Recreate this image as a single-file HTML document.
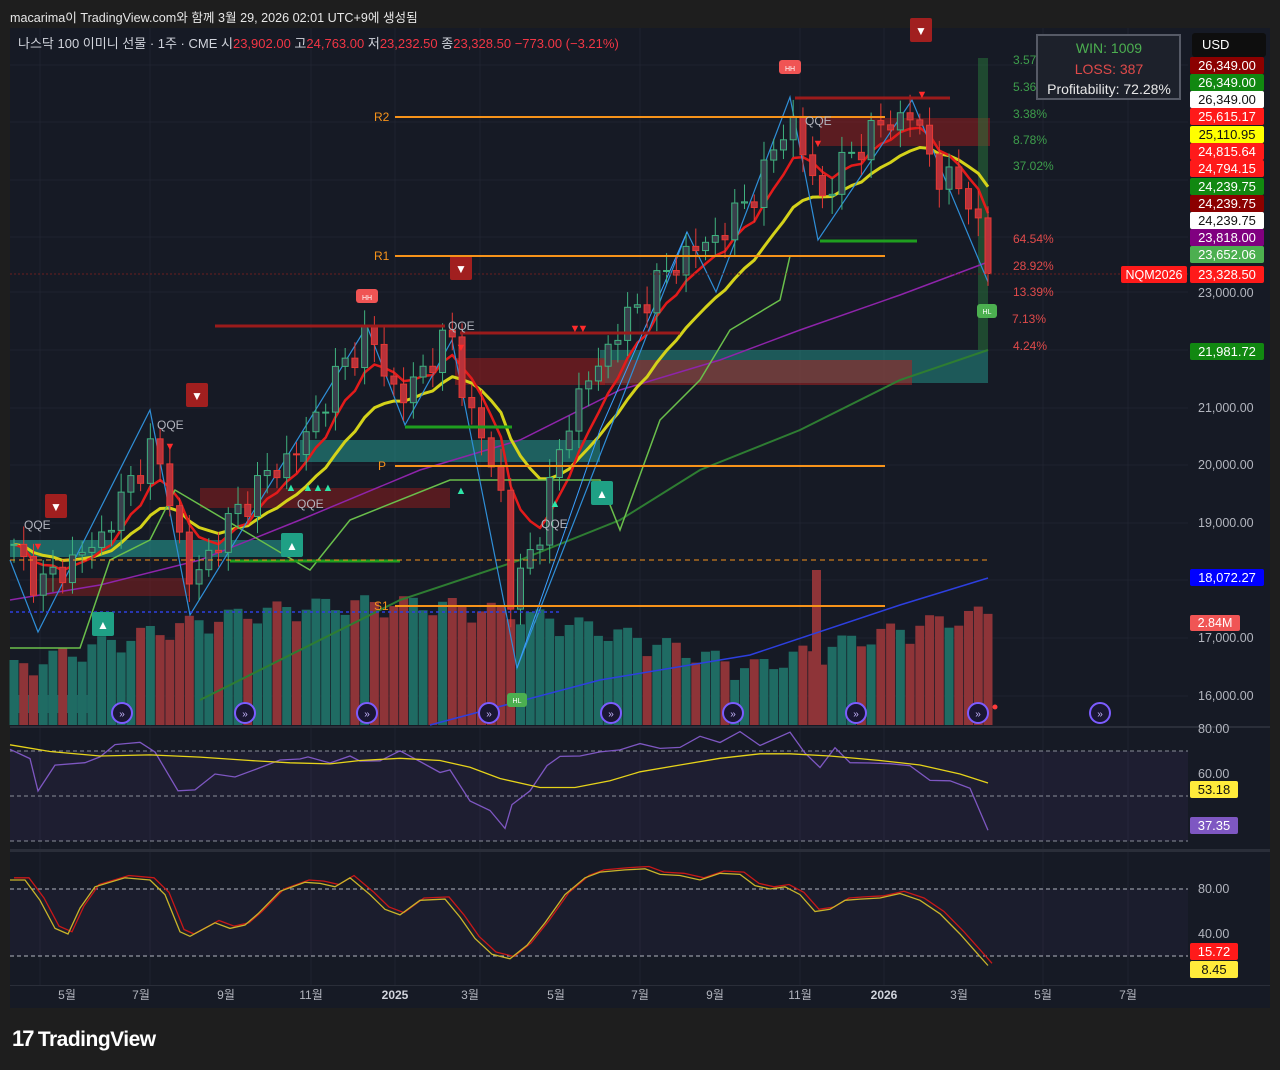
<!DOCTYPE html>
<html><head><meta charset="utf-8">
<style>
html,body{margin:0;padding:0;background:#1e1e1e;width:1280px;height:1070px;overflow:hidden;font-family:"Liberation Sans","Noto Sans CJK KR",sans-serif}
#top{position:absolute;left:10px;top:7px;color:#e6e6e6;font-size:12.6px}
#chart{position:absolute;left:10px;top:28px;width:1260px;height:980px;background:#161a25}
svg text{font-family:"Liberation Sans","Noto Sans CJK KR",sans-serif}
#logo{position:absolute;left:12px;top:1026px;color:#fff;font-size:21px;font-weight:bold;letter-spacing:-0.5px}
</style></head><body>
<div id="top">macarima이 TradingView.com와 함께 3월 29, 2026 02:01 UTC+9에 생성됨</div>
<div id="chart"></div>
<svg id="s" width="1280" height="1070" style="position:absolute;left:0;top:0">
<g id="grid"></g><g id="zones"></g><g id="vol"></g><g id="lines"></g><g id="candles"></g><g id="ov"></g>
<g font-size="13">
<text x="18" y="48" fill="#d1d4dc">나스닥 100 이미니 선물 · 1주 · CME  시<tspan fill="#f23645">23,902.00</tspan>  고<tspan fill="#f23645">24,763.00</tspan>  저<tspan fill="#f23645">23,232.50</tspan>  종<tspan fill="#f23645">23,328.50</tspan>  <tspan fill="#f23645">−773.00 (−3.21%)</tspan></text>
</g>
<g font-size="12" fill="#f7931a">
<line x1="395" y1="117" x2="885" y2="117" stroke="#f7931a" stroke-width="2"/><text x="374" y="121">R2</text>
<line x1="395" y1="256" x2="885" y2="256" stroke="#f7931a" stroke-width="2"/><text x="374" y="260">R1</text>
<line x1="395" y1="466" x2="885" y2="466" stroke="#f7931a" stroke-width="2"/><text x="378" y="470">P</text>
<line x1="395" y1="606" x2="885" y2="606" stroke="#f7931a" stroke-width="2"/><text x="374" y="610">S1</text>
</g>
<g font-size="12" fill="#3e9e4c">
<text x="1013" y="64">3.57</text><text x="1013" y="91">5.36</text><text x="1013" y="118">3.38%</text><text x="1013" y="144">8.78%</text><text x="1013" y="170">37.02%</text>
</g>
<g font-size="12" fill="#e04a4a">
<text x="1013" y="243">64.54%</text><text x="1013" y="270">28.92%</text><text x="1013" y="296">13.39%</text><text x="1012" y="323">7.13%</text><text x="1013" y="350">4.24%</text>
</g>
<g>
<rect x="1037" y="35" width="143" height="64" fill="#1d212b" stroke="#565a66" stroke-width="2"/>
<text x="1109" y="53" font-size="14" fill="#4caf50" text-anchor="middle">WIN: 1009</text>
<text x="1109" y="74" font-size="14" fill="#e04a4a" text-anchor="middle">LOSS: 387</text>
<text x="1109" y="94" font-size="14" fill="#e8e8e8" text-anchor="middle">Profitability: 72.28%</text>
</g>
<g font-size="12.5" fill="#b2b5be" id="axis"></g>
<g font-size="12" fill="#b2b5be">
<text x="67" y="999" text-anchor="middle">5월</text><text x="141" y="999" text-anchor="middle">7월</text><text x="226" y="999" text-anchor="middle">9월</text><text x="311" y="999" text-anchor="middle">11월</text><text x="395" y="999" text-anchor="middle" font-weight="bold" fill="#d1d4dc">2025</text><text x="470" y="999" text-anchor="middle">3월</text><text x="556" y="999" text-anchor="middle">5월</text><text x="640" y="999" text-anchor="middle">7월</text><text x="715" y="999" text-anchor="middle">9월</text><text x="800" y="999" text-anchor="middle">11월</text><text x="884" y="999" text-anchor="middle" font-weight="bold" fill="#d1d4dc">2026</text><text x="959" y="999" text-anchor="middle">3월</text><text x="1043" y="999" text-anchor="middle">5월</text><text x="1128" y="999" text-anchor="middle">7월</text>
</g>
<g font-size="12" fill="#b2b5be">
<text x="24" y="529">QQE</text><text x="157" y="429">QQE</text><text x="297" y="508">QQE</text><text x="448" y="330">QQE</text><text x="541" y="528">QQE</text><text x="805" y="125">QQE</text>
</g>
</svg>
<div id="logo"><span style="font-size:22px;letter-spacing:-2px">17</span> TradingView</div>
<script>
const S=document.getElementById('s');const NS='http://www.w3.org/2000/svg';
function el(g,t,a,txt){const e=document.createElementNS(NS,t);for(const k in a)e.setAttribute(k,a[k]);if(txt!=null)e.textContent=txt;document.getElementById(g)?document.getElementById(g).appendChild(e):S.appendChild(e);return e;}
const Y=p=>465-(p-20000)*0.0575;
[40,150,311,395,480,640,800,884,1043,1128].forEach(x=>el('grid','line',{x1:x,y1:28,x2:x,y2:985,stroke:'#1f2330'}));
[65,122,180,237,292,350,408,465,523,580,638,696].forEach(y=>el('grid','line',{x1:10,y1:y,x2:1188,y2:y,stroke:'#1f2330'}));
el('grid','rect',{x:10,y:726,width:1260,height:2,fill:'#2a2e39'});
el('grid','rect',{x:10,y:849,width:1260,height:3,fill:'#2a2e39'});
el('grid','rect',{x:10,y:985,width:1260,height:1,fill:'#2a2e39'});
el('grid','rect',{x:10,y:751,width:1178,height:90,fill:'rgba(126,87,194,0.08)'});
el('grid','rect',{x:10,y:889,width:1178,height:67,fill:'rgba(126,87,194,0.06)'});
[751,796,841].forEach(y=>el('grid','line',{x1:10,y1:y,x2:1188,y2:y,stroke:'#8a8e99','stroke-dasharray':'4 3'}));
[889,956].forEach(y=>el('grid','line',{x1:10,y1:y,x2:1188,y2:y,stroke:'#b2b5be','stroke-dasharray':'4 3'}));
const Z=[[10,540,280,17,'rgba(38,166,154,0.55)'],[300,440,300,22,'rgba(38,166,154,0.5)'],[600,350,388,33,'rgba(38,166,154,0.45)'],[455,358,150,27,'rgba(160,30,30,0.55)'],[600,360,312,25,'rgba(170,35,35,0.55)'],[200,488,250,20,'rgba(140,30,30,0.55)'],[40,578,150,18,'rgba(140,30,30,0.5)'],[10,695,85,18,'rgba(38,166,154,0.5)'],[820,118,170,28,'rgba(160,30,30,0.5)']];
Z.forEach(z=>el('zones','rect',{x:z[0],y:z[1],width:z[2],height:z[3],fill:z[4]}));
el('zones','rect',{x:978,y:58,width:10,height:292,fill:'rgba(40,120,60,0.5)'});
const K=[[14,18500],[40,17900],[100,18700],[150,20300],[170,19500],[190,17900],[225,18900],[260,19700],[300,20300],[335,21500],[367,22300],[400,21100],[450,22300],[470,20900],[500,19700],[510,17600],[540,18900],[570,20900],[620,22400],[680,23600],[720,24000],[760,24900],[790,26100],[820,24600],[850,25400],[880,25900],[912,26100],[940,25000],[970,24700],[988,23330]];
function P(x){for(let i=0;i<K.length-1;i++){if(x<=K[i+1][0]){const t=(x-K[i][0])/(K[i+1][0]-K[i][0]);return K[i][1]+t*(K[i+1][1]-K[i][1]);}}return K[K.length-1][1];}
const N=101,xs=[],cl=[];
for(let i=0;i<N;i++){const x=14+i*9.74;xs.push(x);cl.push(P(x)+Math.sin(i*2.3)*200+Math.cos(i*1.7)*120);}
cl[N-1]=23330;
for(let i=0;i<N;i++){const o=i?cl[i-1]:cl[0];const up=cl[i]>=o;const h=40+Math.abs(Math.sin(i*3.1))*65+Math.abs(Math.cos(i*0.7))*25;
el('vol','rect',{x:xs[i]-4.5,y:725-h,width:9,height:h,fill:up?'#1f6b63':'#8e3438'});}
el('vol','rect',{x:812,y:570,width:9,height:155,fill:'#8e3438'});
function ema(a,n){const k=2/(n+1);let r=[a[0]];for(let i=1;i<a.length;i++)r.push(a[i]*k+r[i-1]*(1-k));return r;}
function pl(arr,col,w,g,off){let d='';arr.forEach((v,i)=>{d+=(i?'L':'M')+xs[i].toFixed(1)+' '+Y(v+(off||0)).toFixed(1)});el(g||'lines','path',{d:d,fill:'none',stroke:col,'stroke-width':w,'stroke-linejoin':'round'});}
const e1=ema(cl,6),e2=ema(cl,14);
el('lines','path',{d:'M200 700 L400 600 L520 560 L620 520 L700 470 L800 430 L900 380 L988 350',fill:'none',stroke:'#2e7d32','stroke-width':2});
el('lines','path',{d:'M10 600 L100 585 L200 560 L300 520 L420 470 L520 440 L620 390 L720 360 L800 330 L900 295 L988 262',fill:'none',stroke:'#8e24aa','stroke-width':1.5});
el('lines','path',{d:'M430 725 L600 680 L750 655 L900 605 L988 578',fill:'none',stroke:'#2d3fe0','stroke-width':1.5});
pl(e2,'#d4d21a',3);pl(e1,'#e31b1b',2.5);
el('lines','path',{d:'M10 648 L80 648 L110 560 L150 540 L175 490 L310 570 L350 520 L450 480 L600 480 L620 530 L660 420 L700 380 L730 330 L780 300 L790 256 L884 256',fill:'none',stroke:'#6abf4b','stroke-width':1.5});
el('lines','path',{d:'M10 560 L38 632 L150 410 L190 615 L367 326 L405 425 L452 340 L517 668 L687 232 L716 292 L790 97 L818 240 L912 100 L988 282',fill:'none',stroke:'#2f8fd8','stroke-width':1.2});
el('lines','path',{d:'M517 668 L600 430 L687 232',fill:'none',stroke:'#3aa0ff','stroke-width':1});
for(let i=0;i<N;i++){const o=i?cl[i-1]:cl[0],c=cl[i];const up=c>=o;const hi=Math.max(o,c)+100+Math.abs(Math.sin(i*5))*220,lo=Math.min(o,c)-100-Math.abs(Math.cos(i*4))*220;const col=up?'#3fb27f':'#e53935';
el('candles','line',{x1:xs[i],y1:Y(hi),x2:xs[i],y2:Y(lo),stroke:col,'stroke-width':1});
el('candles','rect',{x:xs[i]-3,y:Y(Math.max(o,c)),width:6,height:Math.max(1,Math.abs(Y(o)-Y(c))),fill:up?'#39404c':'#b8323a',stroke:col,'stroke-width':1});}
el('ov','line',{x1:215,y1:326,x2:445,y2:326,stroke:'#9b1b1b','stroke-width':3});
el('ov','line',{x1:460,y1:333,x2:680,y2:333,stroke:'#9b1b1b','stroke-width':3});
el('ov','line',{x1:795,y1:98,x2:950,y2:98,stroke:'#9b1b1b','stroke-width':3});
el('ov','line',{x1:405,y1:427,x2:512,y2:427,stroke:'#1f9e1f','stroke-width':3});
el('ov','line',{x1:820,y1:241,x2:917,y2:241,stroke:'#1f9e1f','stroke-width':3});
el('ov','line',{x1:230,y1:561,x2:400,y2:561,stroke:'#1f9e1f','stroke-width':3});
el('ov','line',{x1:10,y1:560,x2:988,y2:560,stroke:'#f7931a','stroke-dasharray':'5 4'});
el('ov','line',{x1:10,y1:274,x2:1188,y2:274,stroke:'#6b1f1f','stroke-dasharray':'2 2'});
el('ov','line',{x1:10,y1:612,x2:560,y2:612,stroke:'#2d3fe0','stroke-dasharray':'3 3','stroke-width':1.5});
[[790,68,'HH','#f05454'],[367,297,'HH','#f05454']].forEach(b=>{el('ov','rect',{x:b[0]-11,y:b[1]-8,width:22,height:14,rx:3,fill:b[3]});el('ov','text',{x:b[0],y:b[1]+3,'font-size':7,fill:'#fff','text-anchor':'middle'},b[2]);});
[[987,311,'HL','#4caf50'],[517,700,'HL','#4caf50']].forEach(b=>{el('ov','rect',{x:b[0]-10,y:b[1]-7,width:20,height:14,rx:3,fill:b[3]});el('ov','text',{x:b[0],y:b[1]+3,'font-size':7,fill:'#fff','text-anchor':'middle'},b[2]);});
[[461,268],[197,395],[56,506],[921,30]].forEach(b=>{el('ov','rect',{x:b[0]-11,y:b[1]-12,width:22,height:24,rx:2,fill:'#a11f1f'});el('ov','text',{x:b[0],y:b[1]+5,'font-size':12,fill:'#fff','text-anchor':'middle'},'▼');});
[[292,545],[602,493],[103,624]].forEach(b=>{el('ov','rect',{x:b[0]-11,y:b[1]-12,width:22,height:24,rx:2,fill:'#1fa085'});el('ov','text',{x:b[0],y:b[1]+5,'font-size':12,fill:'#fff','text-anchor':'middle'},'▲');});
[[461,347],[818,143],[575,328],[583,328],[38,546],[170,446],[922,94]].forEach(b=>el('ov','text',{x:b[0],y:b[1]+4,'font-size':11,fill:'#ff2b2b','text-anchor':'middle'},'▼'));
[[291,487],[308,487],[318,487],[328,487],[461,490],[555,503]].forEach(b=>el('ov','text',{x:b[0],y:b[1]+4,'font-size':11,fill:'#2ee6a8','text-anchor':'middle'},'▲'));
[122,245,367,489,611,733,856,978,1100].forEach(x=>{el('ov','circle',{cx:x,cy:713,r:10,fill:'#1a1733',stroke:'#7c5cff','stroke-width':2});el('ov','text',{x:x,y:717,'font-size':10,fill:'#c8b8ff','text-anchor':'middle'},'»');});
el('ov','circle',{cx:995,cy:707,r:2.5,fill:'#ff3b3b'});
const ry=v=>729+(80-v)*2.25;
function ser(pts,col,w,f){let d='';pts.forEach((p,i)=>d+=(i?'L':'M')+p[0]+' '+f(p[1]).toFixed(1));el('lines','path',{d:d,fill:'none',stroke:col,'stroke-width':w});}
const rsiK=[[10,71],[30,66],[38,54],[55,62],[85,67],[100,66],[115,74],[140,74],[155,69],[178,54],[195,51],[215,62],[235,57],[255,63],[280,66],[300,66],[308,69],[330,63],[350,70],[360,64],[380,67],[400,70],[420,65],[440,62],[450,60],[470,50],[490,42],[505,37],[512,46],[530,52],[547,65],[560,66],[580,70],[600,68],[620,72],[640,73],[660,71],[680,73],[700,75],[720,76],[740,77],[760,74],[790,78],[805,69],[820,64],[835,70],[850,67],[870,63],[890,66],[910,63],[930,57],[950,58],[970,52],[988,37]];
ser(rsiK.map((p,i)=>[p[0],p[1]+Math.sin(i*2.7)*2]),'#7e57c2',1.3,ry);
const rsiMA=[[10,73],[50,70],[100,68],[150,68.5],[200,67.5],[250,66],[290,65],[330,64.5],[360,66],[400,67],[440,66],[470,63],[500,58],[540,54],[575,54],[610,57],[640,61],[680,64],[720,67],[760,69],[790,69],[830,68],[880,66],[920,64],[960,60],[988,56]];
ser(rsiMA,'#e6d31a',1.3,ry);
const sy=v=>889+(80-v)*1.125;
const st=[[10,88],[25,88],[40,70],[55,45],[68,40],[80,63],[95,82],[125,90],[150,88],[165,75],[180,42],[190,38],[215,50],[230,45],[245,48],[258,58],[280,78],[305,86],[320,85],[335,82],[350,90],[370,75],[385,62],[400,57],[420,70],[445,71],[460,55],[475,36],[492,22],[510,18],[527,30],[545,50],[565,75],[585,90],[600,95],[625,97],[645,98],[660,93],[680,92],[700,88],[720,94],[740,93],[755,83],[770,80],[785,82],[800,75],[815,60],[830,62],[845,70],[860,71],[880,72],[900,76],[920,70],[940,58],[960,40],[975,25],[988,12]];
ser(st.map((p,i)=>[p[0]+4,p[1]+2]),'#c81818',1.3,sy);
ser(st,'#c9b42a',1.3,sy);
function lab(y,t,bg,fg,w){el('ov','rect',{x:1190,y:y,width:w||74,height:17,rx:2,fill:bg});el('ov','text',{x:1227,y:y+13,'font-size':13,fill:fg,'text-anchor':'middle'},t);}
lab(57,'26,349.00','#8b0000','#fff');lab(74,'26,349.00','#118811','#fff');lab(91,'26,349.00','#ffffff','#111');lab(108,'25,615.17','#ff1a1a','#fff');lab(126,'25,110.95','#ffff00','#111');lab(143,'24,815.64','#ff1a1a','#fff');lab(160,'24,794.15','#ff1a1a','#fff');lab(178,'24,239.75','#118811','#fff');lab(195,'24,239.75','#8b0000','#fff');lab(212,'24,239.75','#ffffff','#111');lab(229,'23,818.00','#800080','#fff');lab(246,'23,652.06','#4caf50','#fff');lab(266,'23,328.50','#ff1a1a','#fff');
el('ov','rect',{x:1121,y:266,width:66,height:17,rx:2,fill:'#ff1a1a'});el('ov','text',{x:1154,y:279,'font-size':12.5,fill:'#fff','text-anchor':'middle'},'NQM2026');
lab(343,'21,981.72','#118811','#fff');lab(569,'18,072.27','#0000ff','#fff');
el('ov','rect',{x:1190,y:615,width:50,height:16,rx:2,fill:'#f05555'});el('ov','text',{x:1215,y:627,'font-size':12.5,fill:'#fff','text-anchor':'middle'},'2.84M');
[[297,'23,000.00'],[412,'21,000.00'],[469,'20,000.00'],[527,'19,000.00'],[642,'17,000.00'],[700,'16,000.00'],[733,'80.00'],[778,'60.00'],[893,'80.00'],[938,'40.00']].forEach(a=>el('axis','text',{x:1198,y:a[0]},a[1]));
function lab2(y,t,bg,fg){el('ov','rect',{x:1190,y:y,width:48,height:17,rx:2,fill:bg});el('ov','text',{x:1214,y:y+13,'font-size':13,fill:fg,'text-anchor':'middle'},t);}
lab2(781,'53.18','#ffeb3b','#111');lab2(817,'37.35','#7e57c2','#fff');lab2(943,'15.72','#ff1a1a','#fff');lab2(961,'8.45','#ffeb3b','#111');
el('ov','rect',{x:1192,y:33,width:74,height:24,rx:3,fill:'#0e0e0e'});el('ov','text',{x:1202,y:49,'font-size':13,fill:'#fff'},'USD');
</script>
</body></html>
